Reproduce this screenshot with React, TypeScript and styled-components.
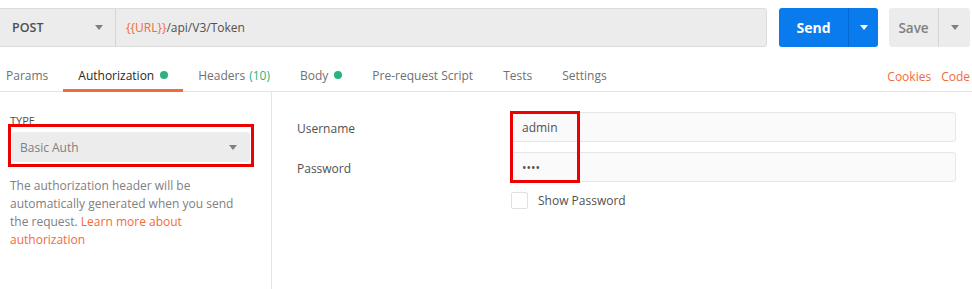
import styled, { createGlobalStyle } from 'styled-components';

const GlobalStyle = createGlobalStyle`
  body {
    margin: 0;
    background: #fff;
    font-family: "Open Sans", "Noto Sans", sans-serif;
    color: #505050;
  }
`

const Page = styled.div`
  width: 972px;
  height: 289px;
  overflow: hidden;
  display: flex;
  flex-direction: column;
`

const TopBar = styled.div`
  display: flex;
  padding: 8px 2px 0 0;
  height: 39px;
  gap: 11px;
`

const RequestBox = styled.div`
  flex: 1;
  display: flex;
  background: #ececec;
  border: 1px solid #dcdcdc;
  border-left: none;
  border-radius: 0 3px 3px 0;
`

const Method = styled.div`
  width: 116px;
  box-sizing: border-box;
  padding: 0 12px;
  display: flex;
  align-items: center;
  justify-content: space-between;
  border-right: 1px solid #d4d4d4;
  font-size: 12.5px;
  font-weight: 600;
  color: #505050;
`

const Caret = styled.span<{ $color?: string }>`
  width: 0;
  height: 0;
  border-left: 4px solid transparent;
  border-right: 4px solid transparent;
  border-top: 5px solid ${p => p.$color || '#808080'};
`

const Url = styled.div`
  flex: 1;
  display: flex;
  align-items: center;
  padding-left: 10px;
  font-size: 12px;
  color: #505050;
`

const Variable = styled.span`
  color: #f26b3a;
`

const SplitButton = styled.div<{ $primary?: boolean }>`
  display: flex;
  margin-left: ${p => (p.$primary ? '1px' : '0')};
  border-radius: 3px;
  background: ${p => (p.$primary ? '#097bed' : '#ececec')};
  color: ${p => (p.$primary ? '#fff' : '#808080')};
  font-size: ${p => (p.$primary ? '14px' : '13.5px')};
  font-weight: ${p => (p.$primary ? 700 : 600)};
`

const ButtonMain = styled.div<{ $w: number; $divider: string }>`
  width: ${p => p.$w}px;
  display: flex;
  align-items: center;
  justify-content: center;
  border-right: 1px solid ${p => p.$divider};
`

const ButtonArrow = styled.div<{ $w: number }>`
  width: ${p => p.$w}px;
  display: flex;
  align-items: center;
  justify-content: center;
`

const TabRow = styled.div`
  margin-top: 13px;
  height: 32px;
  box-sizing: border-box;
  display: flex;
  align-items: stretch;
  border-bottom: 1px solid #e5e5e5;
  padding-left: 6px;
  padding-right: 2px;
`

const Tab = styled.div<{ $active?: boolean }>`
  display: flex;
  align-items: center;
  padding: 1px 15px 0;
  font-size: 12px;
  color: ${p => (p.$active ? '#282828' : '#707070')};
  border-bottom: 3px solid ${p => (p.$active ? '#f26b3a' : 'transparent')};
  margin-bottom: -1px;
  &:first-child {
    padding-left: 0;
  }
`

const Dot = styled.span`
  width: 8px;
  height: 8px;
  border-radius: 50%;
  background: #26b47f;
  margin-left: 6px;
`

const Count = styled.span`
  color: #26b47f;
  margin-left: 4px;
`

const Spacer = styled.div`
  flex: 1;
`

const Links = styled.div`
  display: flex;
  align-items: center;
  gap: 10px;
  font-size: 12px;
  color: #f26b3a;
  padding-top: 1px;
`

const Body = styled.div`
  flex: 1;
  display: flex;
`

const Sidebar = styled.div`
  width: 272px;
  border-right: 1px solid #e5e5e5;
  padding: 23px 10px 0;
  box-sizing: border-box;
`

const TypeLabel = styled.div`
  font-size: 11px;
  line-height: 12px;
  color: #505050;
  margin-bottom: 5px;
`

const SelectWrap = styled.div`
  position: relative;
  margin-left: 2px;
  width: 238px;
`

const Select = styled.div`
  height: 30px;
  background: #ececec;
  display: flex;
  align-items: center;
  justify-content: space-between;
  padding: 0 13px 0 8px;
  font-size: 12px;
  color: #808080;
  border-radius: 3px;
`

const Annotation = styled.div<{ $l: number; $t: number; $w: number; $h: number }>`
  position: absolute;
  left: ${p => p.$l}px;
  top: ${p => p.$t}px;
  width: ${p => p.$w}px;
  height: ${p => p.$h}px;
  border: 3px solid #ee0000;
  box-sizing: border-box;
  pointer-events: none;
`

const Description = styled.p`
  margin: 15px 0 0;
  font-size: 12px;
  line-height: 18px;
  color: #808080;
`

const Link = styled.span`
  color: #f26b3a;
`

const Fields = styled.div`
  flex: 1;
  display: flex;
  padding: 20px 16px 0 25px;
`

const LabelColumn = styled.div`
  width: 214px;
  display: flex;
  flex-direction: column;
  gap: 10px;
`

const FieldLabel = styled.div`
  height: 30px;
  box-sizing: border-box;
  padding-top: 2px;
  display: flex;
  align-items: center;
  font-size: 12px;
  color: #505050;
`

const InputColumn = styled.div`
  flex: 1;
  display: flex;
  flex-direction: column;
  gap: 10px;
  position: relative;
`

const Input = styled.div`
  height: 30px;
  box-sizing: border-box;
  background: #fafafa;
  border: 1px solid #e6e6e6;
  border-radius: 3px;
  display: flex;
  align-items: center;
  padding-left: 10px;
  font-size: 12px;
  color: #505050;
`

const CheckRow = styled.div`
  display: flex;
  align-items: center;
  gap: 10px;
  font-size: 12px;
  color: #505050;
`

const Checkbox = styled.span`
  width: 17px;
  height: 17px;
  box-sizing: border-box;
  border: 1px solid #e0e0e0;
  border-radius: 2px;
  background: #fff;
`

export default function App() {
  return (
    <Page>
      <GlobalStyle />
      <TopBar>
        <RequestBox>
          <Method>
            POST
            <Caret />
          </Method>
          <Url>
            <Variable>{'{{URL}}'}</Variable>/api/V3/Token
          </Url>
        </RequestBox>
        <SplitButton $primary>
          <ButtonMain $w={69} $divider="#0468d4">Send</ButtonMain>
          <ButtonArrow $w={29}><Caret $color="#fff" /></ButtonArrow>
        </SplitButton>
        <SplitButton>
          <ButtonMain $w={49} $divider="#d6d6d6">Save</ButtonMain>
          <ButtonArrow $w={31}><Caret /></ButtonArrow>
        </SplitButton>
      </TopBar>

      <TabRow>
        <Tab>Params</Tab>
        <Tab $active>Authorization<Dot /></Tab>
        <Tab>Headers<Count>(10)</Count></Tab>
        <Tab>Body<Dot /></Tab>
        <Tab>Pre-request Script</Tab>
        <Tab>Tests</Tab>
        <Tab>Settings</Tab>
        <Spacer />
        <Links>
          <span>Cookies</span>
          <span>Code</span>
        </Links>
      </TabRow>

      <Body>
        <Sidebar>
          <TypeLabel>TYPE</TypeLabel>
          <SelectWrap>
            <Select>
              Basic Auth
              <Caret />
            </Select>
            <Annotation $l={-4} $t={-8} $w={246} $h={43} />
          </SelectWrap>
          <Description>
            The authorization header will be<br />
            automatically generated when you send<br />
            the request. <Link>Learn more about<br />authorization</Link>
          </Description>
        </Sidebar>
        <Fields>
          <LabelColumn>
            <FieldLabel>Username</FieldLabel>
            <FieldLabel>Password</FieldLabel>
          </LabelColumn>
          <InputColumn>
            <Input>admin</Input>
            <Input>••••</Input>
            <CheckRow>
              <Checkbox />
              Show Password
            </CheckRow>
            <Annotation $l={-1} $t={-1} $w={70} $h={72} />
          </InputColumn>
        </Fields>
      </Body>
    </Page>
  )
}
